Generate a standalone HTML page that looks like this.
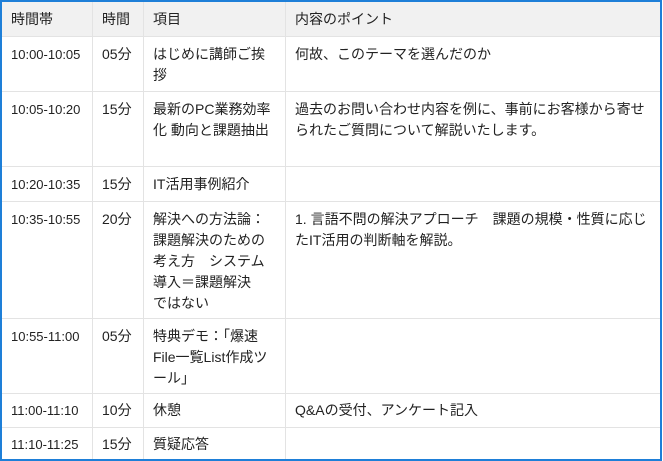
<!DOCTYPE html>
<html><head><meta charset="utf-8"><style>
*{margin:0;padding:0;box-sizing:border-box}
body{width:663px;height:461px;background:#fff;overflow:hidden;font-family:"Liberation Sans","Noto Sans CJK JP",sans-serif;font-size:14px;color:#222}
.frame{position:absolute;left:0;top:0;width:662px;height:461px;border:2px solid #1e7fd8;overflow:hidden}
table{border-collapse:collapse;table-layout:fixed;width:660px;margin-left:-1px;margin-top:-1px}
td,th{border:1px solid #e3e3e3;vertical-align:top;text-align:left;font-weight:normal;padding:7px 9px 0 9px;line-height:21px}
th{background:#f1f1f1;vertical-align:middle;padding-top:0}
td:first-child{font-size:13px}
</style></head><body><div class="frame"><table>
<colgroup><col style="width:91px"><col style="width:51px"><col style="width:142px"><col></colgroup>
<tr style="height:35px"><th>時間帯</th><th>時間</th><th>項目</th><th>内容のポイント</th></tr>
<tr style="height:55px"><td>10:00-10:05</td><td>05分</td><td>はじめに講師ご挨拶</td><td>何故、このテーマを選んだのか</td></tr>
<tr style="height:75px"><td>10:05-10:20</td><td>15分</td><td>最新のPC業務効率<br>化 動向と課題抽出</td><td>過去のお問い合わせ内容を例に、事前にお客様から寄せられたご質問について解説いたします。</td></tr>
<tr style="height:35px"><td>10:20-10:35</td><td>15分</td><td>IT活用事例紹介</td><td></td></tr>
<tr style="height:117px"><td>10:35-10:55</td><td>20分</td><td>解決への方法論：<br>課題解決のための<br>考え方　システム<br>導入＝課題解決<br>ではない</td><td>1. 言語不問の解決アプローチ　課題の規模・性質に応じ<br>たIT活用の判断軸を解説。</td></tr>
<tr style="height:75px"><td>10:55-11:00</td><td>05分</td><td>特典デモ：「爆速<br>File一覧List作成ツ<br>ール」</td><td></td></tr>
<tr style="height:34px"><td style="padding-top:6px">11:00-11:10</td><td style="padding-top:6px">10分</td><td style="padding-top:6px">休憩</td><td style="padding-top:6px">Q&amp;Aの受付、アンケート記入</td></tr>
<tr style="height:34px"><td style="padding-top:6px">11:10-11:25</td><td style="padding-top:6px">15分</td><td style="padding-top:6px">質疑応答</td><td></td></tr>
</table></div></body></html>
